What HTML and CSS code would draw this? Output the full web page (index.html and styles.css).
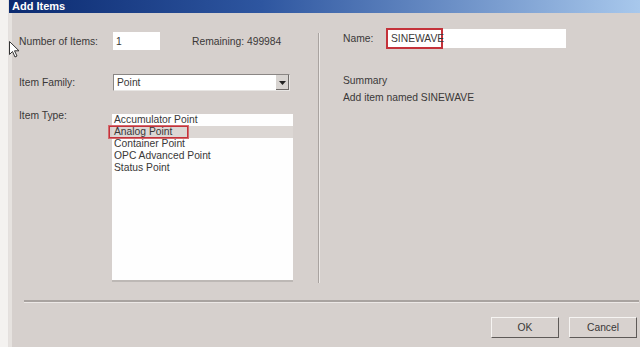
FILE: index.html
```html
<!DOCTYPE html>
<html lang="en">
  <head>
    <meta charset="UTF-8" />
    <title>Add Items</title>
    <link rel="stylesheet" href="styles.css">
  </head>
  <body>
    <div class="frame">
      <div class="edge"></div>
      <div class="window">
        <div class="titlebar">Add Items</div>
        <div class="content">
          <div class="panes">
            <div class="left">
              <div class="row row-count">
                <span class="label">Number of Items:</span>
                <span class="textbox count">1</span>
                <span class="remaining">Remaining: 499984</span>
              </div>
              <div class="row row-family">
                <span class="label">Item Family:</span>
                <span class="select">
                  <span class="select-value">Point</span>
                  <span class="select-btn">
                    <svg width="7" height="4" viewBox="0 0 7 4"><path d="M0 0h7L3.5 4z" fill="#222"/></svg>
                  </span>
                </span>
              </div>
              <div class="row row-type">
                <span class="label type-label">Item Type:</span>
                <ul class="listbox">
                  <li>Accumulator Point</li>
                  <li class="selected"><span class="mark">Analog Point</span></li>
                  <li>Container Point</li>
                  <li>OPC Advanced Point</li>
                  <li>Status Point</li>
                </ul>
              </div>
            </div>
            <div class="divider"></div>
            <div class="right">
              <div class="row row-name">
                <span class="label name-label">Name:</span>
                <span class="textbox name"><span class="name-mark">SINEWAVE<span class="caret"></span></span></span>
              </div>
              <p class="summary-title">Summary</p>
              <p class="summary">Add item named SINEWAVE</p>
            </div>
          </div>
          <div class="rule"></div>
          <div class="actions">
            <button class="btn">OK</button>
            <button class="btn">Cancel</button>
          </div>
        </div>
      </div>
      <svg class="cursor" width="11" height="17" viewBox="0 0 11 17">
        <path d="M0.5 0.5v13l3-3 2.5 5.5 2-1-2.5-5.2h4.5z" fill="#fff" stroke="#333" stroke-width="1"/>
      </svg>
    </div>
  </body>
</html>
```

FILE: styles.css
```css
body {
  margin: 0;
  font-family: "Liberation Sans", Arial, sans-serif;
  font-size: 10.3px;
  color: #3a3838;
  background-color: #d6d0cd;
}

.frame {
  position: relative;
  display: flex;
  width: 640px;
  height: 347px;
  overflow: hidden;
}

.edge {
  width: 8px;
  background-color: #f4f2f0;
  border-right: 1px solid #e4e0de;
}

.window {
  flex: 1;
  display: flex;
  flex-direction: column;
}

.titlebar {
  height: 13px;
  line-height: 12px;
  padding-left: 3px;
  color: #fff;
  font-weight: bold;
  font-size: 11px;
  background: linear-gradient(to right, #0b2a70 0%, #2e56a0 40%, #a8c8ec 100%);
}

.content {
  flex: 1;
  display: flex;
  flex-direction: column;
  border-left: 3px solid #e6e2df;
}

.panes {
  display: flex;
  height: 285px;
}

.left {
  width: 306px;
  padding-left: 7px;
  box-sizing: border-box;
}

.row {
  display: flex;
  align-items: center;
}

.label {
  width: 94px;
  flex-shrink: 0;
}

.row-count {
  margin-top: 19px;
  height: 18px;
}

.textbox {
  display: flex;
  align-items: center;
  box-sizing: border-box;
  background-color: #fff;
  padding-left: 3px;
}

.count {
  width: 47px;
  height: 18px;
}

.remaining {
  margin-left: 32px;
}

.row-family {
  margin-top: 24px;
  height: 17px;
}

.select {
  display: flex;
  width: 177px;
  height: 17px;
  box-sizing: border-box;
  background-color: #fff;
  border: 1px solid #8a8684;
  border-right-color: #e8e6e4;
  border-bottom-color: #e8e6e4;
}

.select-value {
  flex: 1;
  padding-left: 3px;
  line-height: 15px;
}

.select-btn {
  width: 13px;
  display: flex;
  align-items: center;
  justify-content: center;
  background-color: #d8d4d1;
  border-left: 1px solid #fff;
  box-shadow: inset -1px -1px 0 #6e6a68;
}

.row-type {
  margin-top: 23px;
  align-items: flex-start;
}

.type-label {
  margin-top: -4px;
}

.listbox {
  list-style: none;
  margin: 0 0 0 -1px;
  padding: 0;
  width: 181px;
  height: 168px;
  box-sizing: border-box;
  background-color: #fefefe;
  border-bottom: 2px solid #bdb8b5;
}

.listbox li {
  height: 12px;
  line-height: 12px;
  padding-left: 2px;
}

.listbox .selected {
  background-color: #dcd7d4;
}

.mark {
  display: inline-block;
  margin-left: -5px;
  padding: 0 15px 0 4px;
  height: 10px;
  line-height: 10px;
  border: 1px solid #c4323a;
  outline: 1px solid #d46a6e;
}

.divider {
  width: 1px;
  margin-top: 20px;
  height: 250px;
  background-color: #a9a3a0;
  border-right: 1px solid #ece8e6;
}

.right {
  padding-left: 23px;
}

.row-name {
  margin-top: 16px;
  height: 19px;
}

.name-label {
  width: 43px;
}

.name {
  width: 180px;
  height: 19px;
  padding-left: 0;
  align-items: stretch;
}

.name-mark {
  display: flex;
  align-items: center;
  padding-left: 3px;
  width: 57px;
  box-sizing: border-box;
  border: 2px solid #c4323a;
  margin-top: -1px;
  height: 21px;
}

.caret {
  width: 1px;
  height: 12px;
  margin-left: 1px;
  background-color: #222;
}

.summary-title {
  margin: 26px 0 0;
  line-height: 14px;
}

.summary {
  margin: 3px 0 0;
  line-height: 14px;
}

.rule {
  margin: 2px 1px 0 12px;
  height: 2px;
  background-color: #a9a3a0;
  border-bottom: 1px solid #ece8e6;
}

.actions {
  display: flex;
  justify-content: flex-end;
  gap: 10px;
  margin-top: 14px;
  padding-right: 3px;
}

.btn {
  width: 68px;
  height: 21px;
  padding: 0;
  font-family: "Liberation Sans", Arial, sans-serif;
  font-size: 10.3px;
  color: #3a3838;
  background-color: #d8d2cf;
  border: 1px solid #f6f4f2;
  border-right-color: #5e5a58;
  border-bottom-color: #5e5a58;
}

.cursor {
  position: absolute;
  left: 9px;
  top: 41px;
}
```
